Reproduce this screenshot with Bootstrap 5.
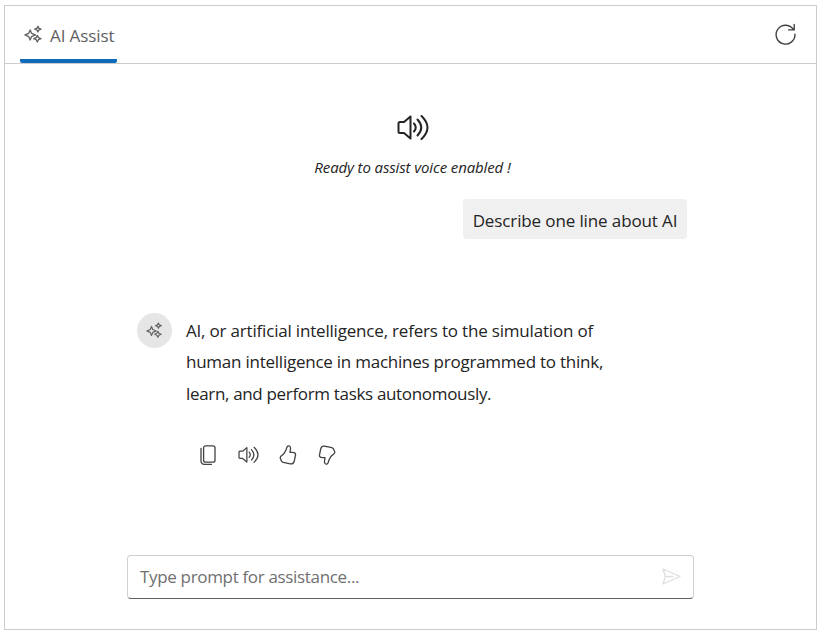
<!DOCTYPE html>
<html lang="en">
<head>
<meta charset="utf-8">
<meta name="viewport" content="width=device-width, initial-scale=1">
<title>AI Assist</title>
<link rel="stylesheet" href="https://cdn.jsdelivr.net/npm/bootstrap@5.3.0/dist/css/bootstrap.min.css">
<style>
body{font-family:"Open Sans","Noto Sans",sans-serif;color:#242424;height:634px;overflow:hidden;padding:5px 4px 4px}
svg{display:block;fill:none;stroke:currentColor;stroke-linecap:round;stroke-linejoin:round;flex:none}
.assist-view{height:625px;width:813px;border:1px solid #ccc}
.assist-head{height:58px;border-bottom:1px solid #ccc;padding:0 20px 0 14.5px;color:#616161}
.assist-tab{width:97px;height:57px;padding:3px 0 0 4px;gap:7.5px;font-size:17px;letter-spacing:-.1px;white-space:nowrap;background:linear-gradient(#0f6cbd,#0f6cbd) bottom/100% 4px no-repeat;border-radius:0 0 2px 2px}
.refresh-icon{color:#424242}
.assist-body{padding:50px 129px 0 132px}
.banner-icon{margin-left:2px}
.banner-text{font-size:15px;line-height:20px;margin:17px 0 1px 1px;letter-spacing:-.12px}
.prompt-bubble{height:40px;width:224px;background:#f0f0f0;font-size:17px;letter-spacing:-.12px;border-radius:4px;margin:21px 0 0;padding-top:3px;white-space:nowrap}
.reply{margin-top:74px;gap:14px}
.avatar{width:35px;height:35px;background:#e6e6e6;color:#616161}
.reply-text{font-size:17px;line-height:31.4px;margin-top:1.8px;white-space:nowrap}
.line-a{letter-spacing:-.19px}
.line-b{letter-spacing:-.24px}
.line-c{letter-spacing:-.33px}
.tools{margin:35.5px 0 0 62px;gap:21px;color:#424242}
.thumb-icon{margin-left:-1px}
.thumb-down{margin-left:-.5px}
.prompt-box{width:567px;height:44px;margin:90px 0 0 -10px;border:1px solid #d1d1d1;border-bottom-color:#616161;border-radius:4px;padding:0 12px 0 12px;font-size:17px;color:#707070}
.box-label{letter-spacing:-.33px}
.send-icon{color:#dedede}
</style>
</head>
<body>
<svg class="d-none" aria-hidden="true">
<symbol id="sparkle" viewBox="0 0 20 20"><path d="M6.500 5.200 8 8.800l4 1.700-4 1.700-1.500 3.600L5 12.200 1 10.500 5 8.800ZM14.600 1.300l.9 2 2.400 1-2.400 1-.9 2-.9-2-2.400-1 2.400-1ZM14 10.900l1.200 2.400 2.600 1.100-2.600 1.100L14 17.900l-1.200-2.400-2.600-1.100 2.600-1.100Z"/></symbol>
<symbol id="speaker" viewBox="0 0 32 26"><path d="M1.500 9.500q0-1.500 1.500-1.500h4L13.500 2.500v22L7 19H3q-1.500 0-1.500-1.500ZM17 9.500q3.500 4 0 8M20.500 5.500q7.500 8 0 16M24.500 2q12 11.500 0 23"/></symbol>
<symbol id="thumb" viewBox="0 0 18 20"><path d="M8.800 1.100c1.700-.8 2.900.6 2.700 2.600L11 7.400h2.800c2.100 0 3 1.200 2.700 2.800l-1.200 5.800c-.5 2-1.900 3.200-3.900 2.800L4.200 17.300c-1.500-.4-2-1.300-2.300-2.500l-.6-1.500c-.4-1.500.4-2.200 1.700-2.900 2.100-1.100 2.900-2.700 4-5.300.7-1.600.5-3.300 1.800-4Z"/></symbol>
</svg>
<main class="assist-view">
  <header class="assist-head d-flex justify-content-between align-items-start">
    <div class="assist-tab d-flex align-items-center">
      <svg class="mb-1" width="19" height="19" stroke-width="1.400"><use href="#sparkle"/></svg><span class="tab-label">AI Assist</span>
    </div>
    <svg class="refresh-icon mt-3" width="22" height="24" viewBox="0 0 22 24" stroke-width="1.400"><path d="M19.600 7.900A9.400 9.400 0 1 0 20.900 12.100M20.200 2.500v5.400h-5.600"/></svg>
  </header>
  <section class="assist-body">
    <div class="d-flex flex-column align-items-center">
      <svg class="banner-icon" width="32" height="26" stroke-width="2"><use href="#speaker"/></svg>
      <em class="banner-text">Ready to assist voice enabled !</em>
    </div>
    <div class="d-flex justify-content-end"><div class="prompt-bubble d-flex align-items-center justify-content-center"><span class="bubble-label">Describe one line about AI</span></div></div>
    <div class="reply d-flex align-items-start">
      <div class="avatar rounded-circle d-flex align-items-center justify-content-center"><svg width="17" height="17" stroke-width="1.400"><use href="#sparkle"/></svg></div>
      <div class="reply-text"><span class="line-a">AI, or artificial intelligence, refers to the simulation of</span><br><span class="line-b">human intelligence in machines programmed to think,</span><br><span class="line-c">learn, and perform tasks autonomously.</span></div>
    </div>
    <div class="tools d-flex align-items-center">
      <svg width="18" height="20" viewBox="0 0 18 20" stroke-width="1.300"><rect x="4.600" y=".8" width="11.400" height="16.400" rx="2"/><path d="M2 3.500v12.300q0 3.500 3.500 3.500h7"/></svg>
      <svg width="21" height="17" stroke-width="1.900"><use href="#speaker"/></svg>
      <svg class="thumb-icon" width="18" height="20" stroke-width="1.300"><use href="#thumb"/></svg>
      <svg class="thumb-down" width="18" height="20" viewBox="0 0 18 20" stroke-width="1.300"><g transform="rotate(180 9 10)"><use href="#thumb" width="18" height="20"/></g></svg>
    </div>
    <div class="prompt-box d-flex align-items-center justify-content-between">
      <span class="box-label">Type prompt for assistance...</span>
      <svg class="send-icon" width="19" height="17" viewBox="0 0 19 17" stroke-width="1.300"><path d="M1 1 18 8.500 1 16l2.400-7.500ZM3.400 8.500H11"/></svg>
    </div>
  </section>
</main>
<script src="https://cdn.jsdelivr.net/npm/bootstrap@5.3.0/dist/js/bootstrap.bundle.min.js"></script>
</body>
</html>
